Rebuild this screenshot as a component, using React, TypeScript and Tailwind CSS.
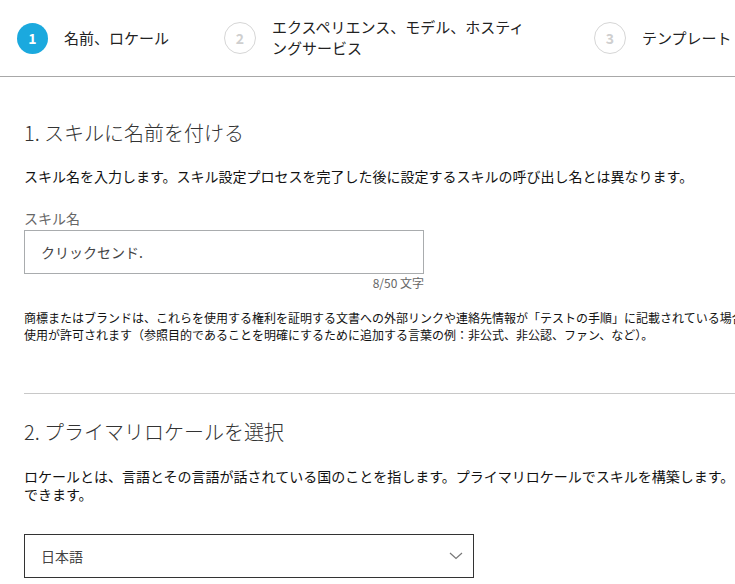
import React from "react";

const font = { fontFamily: '"Noto Sans CJK JP", "Noto Sans", sans-serif' };

function StepCircle({ n, active }: { n: number; active?: boolean }) {
  return active ? (
    <div className="flex h-[31px] w-[31px] shrink-0 items-center justify-center rounded-full bg-[#1ba9de] text-[14px] font-bold text-white">
      {n}
    </div>
  ) : (
    <div className="flex h-[32px] w-[32px] shrink-0 items-center justify-center rounded-full border border-[#d6d6d6] text-[14px] font-bold text-[#cfcfcf]">
      {n}
    </div>
  );
}

export default function App() {
  return (
    <div className="w-full overflow-hidden bg-white" style={font}>
      <div className="w-[980px]">
        {/* wizard steps */}
        <div className="flex h-[77px] items-center border-b border-[#a8a8a8] pl-[17px]">
          <div className="flex w-[207px] items-center gap-[16px]">
            <StepCircle n={1} active />
            <span className="text-[15px] text-[#222]">名前、ロケール</span>
          </div>
          <div className="flex w-[370px] items-center gap-[16px]">
            <StepCircle n={2} />
            <span className="-mt-[2px] w-[258px] text-[15px] leading-[21px] text-[#222]">
              エクスペリエンス、モデル、ホスティングサービス
            </span>
          </div>
          <div className="flex items-center gap-[16px]">
            <StepCircle n={3} />
            <span className="text-[15px] text-[#222]">テンプレート</span>
          </div>
        </div>

        <div className="pl-[24px]">
          {/* section 1 */}
          <h2 className="mt-[42px] text-[20px] font-light leading-[28px] text-[#333]">
            1. スキルに名前を付ける
          </h2>
          <p className="mt-[20px] text-[14px] leading-[18px] text-[#111]">
            スキル名を入力します。スキル設定プロセスを完了した後に設定するスキルの呼び出し名とは異なります。
          </p>
          <label className="mt-[23px] block text-[14px] leading-[20px] text-[#666]">
            スキル名
          </label>
          <div className="mt-[2px] w-[400px]">
            <div className="flex h-[44px] items-center border border-[#a9acae] pl-[16px] text-[14px] text-[#444]">
              クリックセンド.
            </div>
            <div className="mt-[1px] text-right text-[12px] leading-[16px] text-[#666]">
              8/50 文字
            </div>
          </div>
          <p className="mt-[18px] text-[12px] leading-[17px] text-[#111]">
            商標またはブランドは、これらを使用する権利を証明する文書への外部リンクや連絡先情報が「テストの手順」に記載されている場合のみ、
            <br />
            使用が許可されます（参照目的であることを明確にするために追加する言葉の例：非公式、非公認、ファン、など）。
          </p>

          <div className="mt-[50px] border-t border-[#c8c8c8]" />

          {/* section 2 */}
          <h2 className="mt-[24px] text-[20px] font-light leading-[28px] text-[#333]">
            2. プライマリロケールを選択
          </h2>
          <p className="mt-[21px] text-[14px] leading-[18px] text-[#111]">
            ロケールとは、言語とその言語が話されている国のことを指します。プライマリロケールでスキルを構築します。 後で他のロケールを追加することが
            <br />
            できます。
          </p>
          <div className="mt-[31px] flex h-[44px] w-[450px] items-center justify-between border border-[#333] pl-[16px] pr-[10px] text-[14px] text-[#444]">
            <span>日本語</span>
            <svg width="14" height="8" viewBox="0 0 14 8" fill="none">
              <polyline points="1,1 7,6.5 13,1" stroke="#777" strokeWidth="1.2" />
            </svg>
          </div>
          <div className="h-[40px]" />
        </div>
      </div>
    </div>
  );
}
